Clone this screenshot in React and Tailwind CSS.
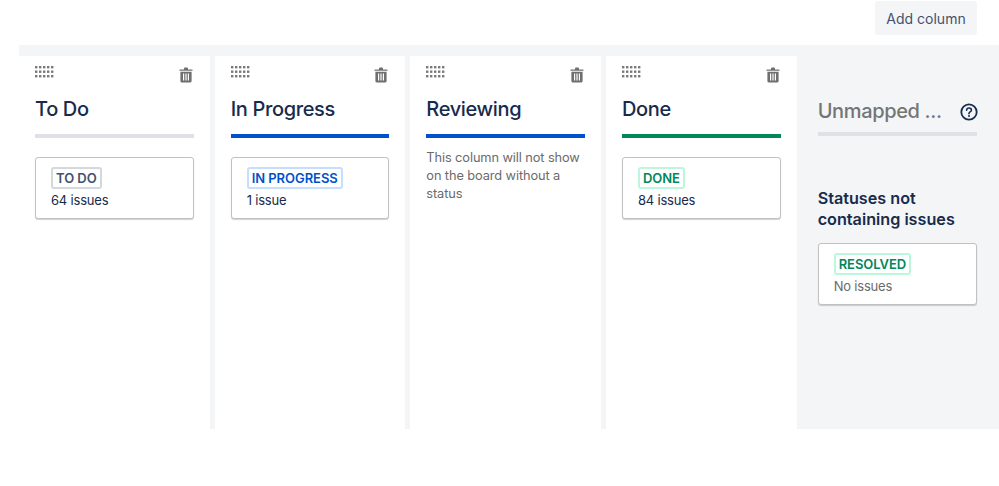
import { Fragment } from 'react';

const columns = [
  { title: 'To Do', bar: 'bg-[#dfe1e6]', lozenge: 'TO DO', tone: 'border-[#d3d7de] text-[#42526e]', count: '64 issues' },
  { title: 'In Progress', bar: 'bg-[#0052cc]', lozenge: 'IN PROGRESS', tone: 'border-[#c4deff] text-[#0052cc]', count: '1 issue' },
  { title: 'Reviewing', bar: 'bg-[#0052cc]' },
  { title: 'Done', bar: 'bg-[#00875a]', lozenge: 'DONE', tone: 'border-[#bdf7db] text-[#00875a]', count: '84 issues' },
];

function DragHandle() {
  const dots = [];
  for (let row = 0; row < 3; row++) {
    for (let col = 0; col < 5; col++) {
      dots.push(<rect key={`${row}-${col}`} x={col * 4} y={row * 4.5} width="2.4" height="2.4" fill="#7a7a7a" />);
    }
  }
  return (
    <svg width="20" height="12" viewBox="0 0 20 12">
      {dots}
    </svg>
  );
}

function TrashIcon() {
  return (
    <svg width="14" height="16" viewBox="0 0 14 16">
      <path d="M5 1.6 Q5 .6 6 .6 H8 Q9 .6 9 1.6 V2.4 H13 Q13.6 2.4 13.6 3 V3.8 H.4 V3 Q.4 2.4 1 2.4 H5 Z" fill="#6f6f6f" />
      <path fillRule="evenodd" d="M1.4 4.8 H12.6 V14 Q12.6 15.6 11 15.6 H3 Q1.4 15.6 1.4 14 Z M4 6.6 V13.6 H5.2 V6.6 Z M6.4 6.6 V13.6 H7.6 V6.6 Z M8.8 6.6 V13.6 H10 V6.6 Z" fill="#6f6f6f" />
    </svg>
  );
}

function HelpIcon() {
  return (
    <svg className="-mr-[1px] mt-[1px]" width="18" height="18" viewBox="0 0 18 18" fill="none">
      <circle cx="9" cy="9" r="7.7" stroke="#172b4d" strokeWidth="1.8" />
      <path d="M6.6 7.2 Q6.7 5 9 5 Q11.4 5 11.4 7 Q11.4 8.2 10.1 8.9 Q9 9.5 9 10.8" stroke="#172b4d" strokeWidth="1.6" strokeLinecap="round" />
      <circle cx="9" cy="13" r="1" fill="#172b4d" />
    </svg>
  );
}

function StatusCard({ lozenge, tone, count, muted }) {
  return (
    <div className="h-[62px] rounded-[3px] border border-[#c1c1c1] bg-white pl-[15px] pt-[9px] shadow-[0_1px_1px_rgba(9,30,66,0.2)]">
      <span className={`block w-fit h-[22px] rounded-[3px] border-2 px-[3px] text-[13px] tracking-[-0.05px] leading-[18px] font-semibold ${tone}`}>
        {lozenge}
      </span>
      <p className={`mt-[1px] text-[13px] tracking-[-0.2px] leading-[20px] ${muted ? 'text-[#6b6b6b]' : 'text-[#172b4d]'}`}>{count}</p>
    </div>
  );
}

function Column({ column }) {
  return (
    <div className="w-[190.67px] shrink-0 bg-white pl-[16px] pr-[16px] pt-[10px]">
      <div className="flex items-start justify-between">
        <DragHandle />
        <div className="pr-[1px] pt-[1px]">
          <TrashIcon />
        </div>
      </div>
      <h2 className="mt-[10px] h-[32px] text-[20px] tracking-[-0.35px] leading-[32px] font-medium text-[#172b4d]">{column.title}</h2>
      <div className={`mt-[9px] h-[4px] ${column.bar}`} />
      {column.lozenge ? (
        <div className="mt-[19px]">
          <StatusCard lozenge={column.lozenge} tone={column.tone} count={column.count} />
        </div>
      ) : (
        <p className="mt-[11px] text-[12.8px] tracking-[-0.1px] leading-[18px] text-[#6b6b6b]">
          This column will not show on the board without a status
        </p>
      )}
    </div>
  );
}

export default function App() {
  return (
    <div className="h-[486px] w-[999px] overflow-hidden bg-white font-['Inter','Liberation_Sans',sans-serif]">
      <div className="flex h-[45px] justify-end pr-[22px] pt-[1px]">
        <button className="h-[34px] w-[102px] rounded-[3px] bg-[#f4f5f7] text-[14px] text-[#42526e]">Add column</button>
      </div>
      <div className="ml-[19px] flex h-[384px] gap-[5px] bg-[#f4f5f7] pt-[11px]">
        {columns.map((column) => (
          <Fragment key={column.title}>
            <Column column={column} />
          </Fragment>
        ))}
        <div className="flex-1 pl-[16px] pr-[22px] pt-[39px]">
          <div className="flex h-[37px] items-center justify-between pb-[5px]">
            <h2 className="text-[20px] tracking-[-0.35px] font-medium text-[#757575]">Unmapped ...</h2>
            <HelpIcon />
          </div>
          <div className="h-[4px] bg-[#dfe1e6]" />
          <h3 className="mt-[52px] text-[16.2px] leading-[21px] font-semibold text-[#172b4d]">
            Statuses not containing issues
          </h3>
          <div className="mt-[13px]">
            <StatusCard lozenge="RESOLVED" tone="border-[#bdf7db] text-[#00875a]" count="No issues" muted />
          </div>
        </div>
      </div>
    </div>
  );
}
